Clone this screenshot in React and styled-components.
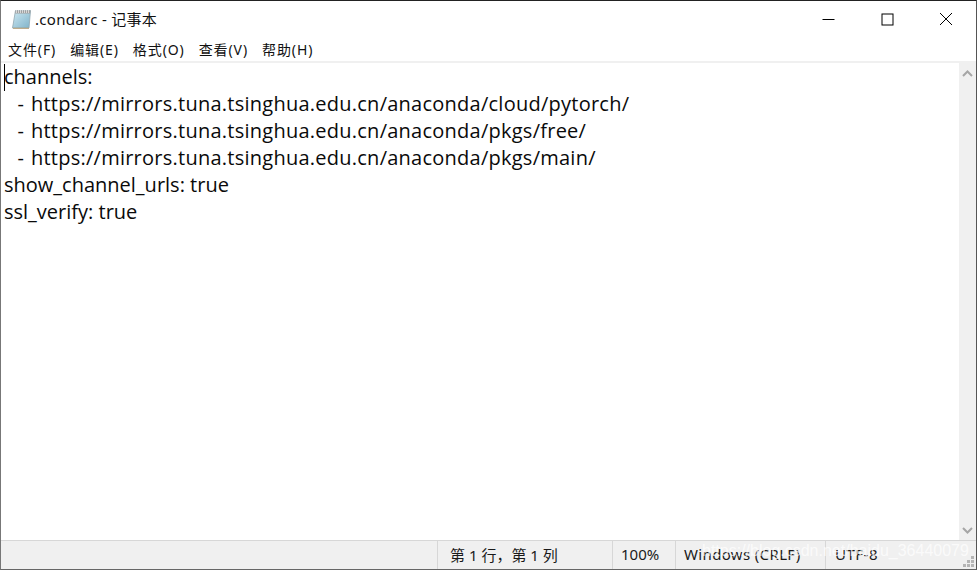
import React from 'react';
import styled, { createGlobalStyle } from 'styled-components';

const Global = createGlobalStyle`
  html, body { margin: 0; padding: 0; background: #fff; }
  #root { width: 977px; height: 570px; }
`;
const Win = styled.div`
  position: relative; width: 977px; height: 570px; box-sizing: border-box; overflow: hidden;
  display: flex; flex-direction: column; background: #fff;
  border-top: 1px solid #222; border-left: 1px solid #777; border-right: 1px solid #555; border-bottom: 1px solid #666;
  font-family: "Open Sans", "Noto Sans CJK SC", sans-serif; color: #000;
`;
const TitleBar = styled.div`
  height: 36px; display: flex; align-items: center; padding-left: 10px; flex: none;
`;
const TitleText = styled.span`
  font-size: 15px; margin-left: 3px; font-family: "Noto Sans", "Noto Sans CJK SC", sans-serif; margin-top: -1px; color: #111;
  letter-spacing: 0.3px;
`;
const Controls = styled.div`
  margin-left: auto; margin-right: 1px; display: flex; height: 100%;
`;
const Ctl = styled.div`
  width: 58.5px; display: flex; align-items: center; justify-content: center;
`;
const MenuBar = styled.div`
  height: 25px; display: flex; align-items: center; padding-left: 7px; gap: 14px; flex: none; font-size: 14px;
  font-family: "Noto Sans", "Noto Sans CJK SC", sans-serif;
`;
const MenuItem = styled.span`color: #111; letter-spacing: 0.9px; margin-top: -1px;`;
const Divider = styled.div`height: 2px; background: #f0f0f0; flex: none; margin-top: -1px;`;
const Main = styled.div`flex: 1; display: flex; min-height: 0;`;
const Editor = styled.div`
  flex: 1; position: relative; padding: 0 0 0 3px; font-size: 20px; line-height: 27px; white-space: pre; color: #0a0a0a;
`;
const Caret = styled.div`position: absolute; left: 3px; top: 1px; width: 1px; height: 27px; background: #000;`;
const Line = styled.div`
  height: 27px;
  letter-spacing: ${p => (p.$url ? '0.25px' : '0')};
  word-spacing: ${p => (p.$url ? '1.3px' : '0')};
`;
const ScrollBar = styled.div`
  width: 17px; flex: none; background: #f0f0f0; display: flex; flex-direction: column; justify-content: space-between; align-items: center; padding: 7px 0 6px; box-sizing: border-box;
`;
const Status = styled.div`
  position: relative; height: 29px; flex: none; background: #f0f0f0; border-top: 1px solid #d7d7d7; box-sizing: border-box;
  display: flex; font-size: 15px; font-family: "Noto Sans", "Noto Sans CJK SC", sans-serif; color: #1a1a1a; padding-left: 436px;
`;
const Cell = styled.div`
  width: ${p => p.$w}px; flex: none; box-sizing: border-box; border-left: 1px solid #d7d7d7; padding-left: ${p => p.$pad ?? 8}px; padding-bottom: 2px;
  letter-spacing: ${p => p.$track ?? 0}px;
  display: flex; align-items: center; white-space: pre;
`;
const Watermark = styled.div`
  position: absolute; left: 701px; top: 541px; font-size: 16px; color: rgba(255,255,255,0.72); white-space: nowrap;
  font-family: "Liberation Sans", sans-serif;
`;
const Grip = styled.svg`position: absolute; right: 1px; bottom: 1px;`;

const NotepadIcon = () => (
  <svg width="21" height="20" viewBox="0 0 21 20" style={{ flex: 'none' }}>
    <defs>
      <linearGradient id="pg" x1="0" y1="0" x2="1" y2="1">
        <stop offset="0" stopColor="#cfe9f3" />
        <stop offset="1" stopColor="#7fb3c9" />
      </linearGradient>
    </defs>
    <path d="M4.5 1.5 H19.5 L18 19 H1.5 Z" fill="url(#pg)" stroke="#8fa6b0" strokeWidth="0.8" />
    <path d="M4.5 1.5 H19.5 L19.2 4.5 H4.2 Z" fill="#a0a0a0" />
    <path d="M5.5 1v3M7.5 1v3M9.5 1v3M11.5 1v3M13.5 1v3M15.5 1v3M17.5 1v3" stroke="#e4e4e4" strokeWidth="0.8" />
    <path d="M2 19.3 H18" stroke="#b89a6a" strokeWidth="0.9" fill="none" />
  </svg>
);

const lines = [
  ['channels:', false],
  ['  - https://mirrors.tuna.tsinghua.edu.cn/anaconda/cloud/pytorch/', true],
  ['  - https://mirrors.tuna.tsinghua.edu.cn/anaconda/pkgs/free/', true],
  ['  - https://mirrors.tuna.tsinghua.edu.cn/anaconda/pkgs/main/', true],
  ['show_channel_urls: true', false],
  ['ssl_verify: true', false],
];

export default function App() {
  return (
    <Win>
      <Global />
      <TitleBar>
        <NotepadIcon />
        <TitleText>.condarc - 记事本</TitleText>
        <Controls>
          <Ctl>
            <svg width="13" height="13" viewBox="0 0 13 13"><path d="M0.5 6.5H12.5" stroke="#000" strokeWidth="1" /></svg>
          </Ctl>
          <Ctl>
            <svg width="13" height="13" viewBox="0 0 13 13"><rect x="1" y="1" width="11" height="11" fill="none" stroke="#000" strokeWidth="1" /></svg>
          </Ctl>
          <Ctl>
            <svg width="14" height="14" viewBox="0 0 14 14"><path d="M1 1L13 13M13 1L1 13" stroke="#000" strokeWidth="1" /></svg>
          </Ctl>
        </Controls>
      </TitleBar>
      <MenuBar>
        {['文件(F)', '编辑(E)', '格式(O)', '查看(V)', '帮助(H)'].map(m => <MenuItem key={m}>{m}</MenuItem>)}
      </MenuBar>
      <Divider />
      <Main>
        <Editor>
          <Caret />
          {lines.map(([l, url]) => <Line key={l} $url={url}>{l}</Line>)}
        </Editor>
        <ScrollBar>
          <svg width="11" height="7" viewBox="0 0 11 7"><path d="M1 6L5.5 1.5L10 6" fill="none" stroke="#a6a6a6" strokeWidth="2" /></svg>
          <svg width="11" height="7" viewBox="0 0 11 7"><path d="M1 1L5.5 5.5L10 1" fill="none" stroke="#a6a6a6" strokeWidth="2" /></svg>
        </ScrollBar>
      </Main>
      <Status>
        <Cell $w={175} $pad={12}>第 1 行，第 1 列</Cell>
        <Cell $w={63}>100%</Cell>
        <Cell $w={150} $track={0.35}>Windows (CRLF)</Cell>
        <Cell $w={130} $pad={9} $track={0.5}>UTF-8</Cell>
        <Grip width="12" height="12" viewBox="0 0 12 12" fill="#b5b5b5">
          <rect x="8" y="0" width="3" height="3" /><rect x="4" y="4" width="3" height="3" /><rect x="8" y="4" width="3" height="3" />
          <rect x="0" y="8" width="3" height="3" /><rect x="4" y="8" width="3" height="3" /><rect x="8" y="8" width="3" height="3" />
        </Grip>
      </Status>
      <Watermark>https://blog.csdn.net/baidu_36440079</Watermark>
    </Win>
  );
}
